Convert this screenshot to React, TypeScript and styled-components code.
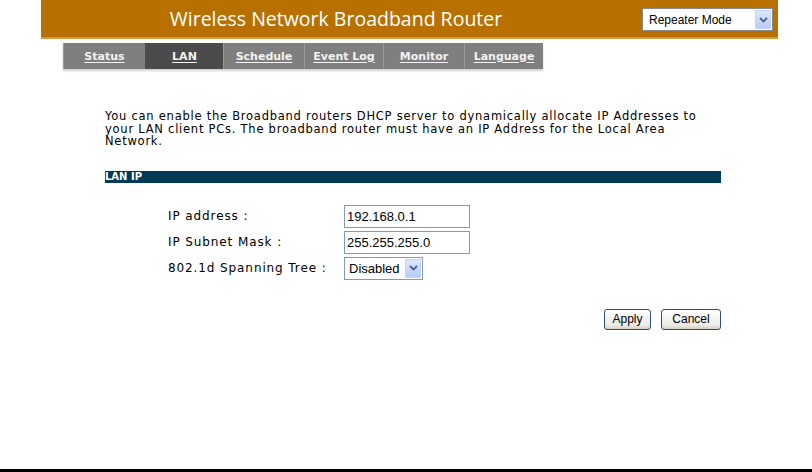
import React from "react";
import styled, { createGlobalStyle } from "styled-components";

const GlobalStyle = createGlobalStyle`
  html, body {
    margin: 0;
    padding: 0;
    background: #ffffff;
  }
  body {
    font-family: "DejaVu Sans", Verdana, sans-serif;
    font-size: 11px;
    color: #000;
  }
`;

const Page = styled.div`
  min-height: 100vh;
  display: flex;
  flex-direction: column;
  box-sizing: border-box;
`;

const Main = styled.div`
  flex: 1;
  width: 737px;
  margin-left: 41px;
`;

const Header = styled.div`
  height: 37px;
  background: #b87100;
  border-bottom: 2px solid #d49a3c;
  display: flex;
  align-items: center;
  position: relative;
`;

const Title = styled.div`
  flex: 1;
  text-align: center;
  font-family: "Open Sans", "Liberation Sans", sans-serif;
  font-size: 19.5px;
  color: #ffffff;
  margin-right: 147px;
`;

const SelectWrap = styled.div<{ $w: number; $h: number }>`
  position: relative;
  width: ${(p) => p.$w}px;
  height: ${(p) => p.$h}px;
  box-sizing: border-box;
  border: 1px solid #7f9db9;
  background: #fff;
  display: flex;
  align-items: center;
  font-family: "Liberation Sans", Arial, sans-serif;
  font-size: 13px;
  padding-left: 4px;
`;

const HeaderSelect = styled(SelectWrap)`
  position: absolute;
  right: 5px;
  top: 8px;
  border-color: #8a8a8a;
  font-size: 12px;
  padding-left: 6px;
`;

const ArrowBox = styled.span`
  position: absolute;
  right: 1px;
  top: 1px;
  bottom: 1px;
  width: 16px;
  background: linear-gradient(#dde8fe, #b6ccfa);
  border: 1px solid #c3d3fd;
  box-sizing: border-box;
  display: flex;
  align-items: center;
  justify-content: center;
`;

const Chevron = () => (
  <svg width="9" height="6" viewBox="0 0 9 6">
    <path d="M1 1 L4.5 4.5 L8 1" fill="none" stroke="#4d6185" strokeWidth="1.8" />
  </svg>
);

const Nav = styled.div`
  display: flex;
  margin: 4px 0 0 22px;
  width: 480px;
  height: 26px;
  background: #7f7f7f;
  box-shadow: 0 2px 2px #d0d0d0;
`;

const Tab = styled.div<{ $active?: boolean; $w: number }>`
  width: ${(p) => p.$w}px;
  display: flex;
  align-items: center;
  justify-content: center;
  background: ${(p) => (p.$active ? "#4b4b4b" : "#7f7f7f")};
  border-left: 1px solid ${(p) => (p.$active ? "#4b4b4b" : "#9a9a9a")};
  color: #f2f2f2;
  font-weight: bold;
  font-size: 11px;
  text-decoration: underline;
  text-underline-offset: 2px;
`;

const Content = styled.div`
  margin-left: 64px;
  width: 616px;
`;

const Intro = styled.p`
  margin: 41px 0 0 0;
  line-height: 12.5px;
  font-size: 11.5px;
  letter-spacing: 0.75px;
  white-space: nowrap;
  color: #000;
`;

const SectionBar = styled.div`
  margin-top: 23px;
  height: 12px;
  background: #003a57;
  color: #fff;
  font-weight: bold;
  font-size: 10px;
  line-height: 12px;
`;

const Form = styled.div`
  margin: 22px 0 0 63px;
  display: grid;
  grid-template-columns: 176px auto;
  row-gap: 3px;
  align-items: center;
`;

const Label = styled.div`
  font-size: 12px;
  letter-spacing: 0.9px;
`;

const TextBox = styled.div`
  width: 126px;
  height: 23px;
  box-sizing: border-box;
  border: 1px solid #7f9db9;
  font-family: "Liberation Sans", Arial, sans-serif;
  font-size: 13px;
  display: flex;
  align-items: center;
  padding-left: 2px;
`;

const Buttons = styled.div`
  display: flex;
  justify-content: flex-end;
  gap: 10px;
  margin-top: 29px;
`;

const Button = styled.div<{ $w: number }>`
  width: ${(p) => p.$w}px;
  height: 21px;
  box-sizing: border-box;
  border: 1px solid #2c4f80;
  border-radius: 3px;
  background: linear-gradient(#ffffff, #ecebe6 80%, #d6d0c5);
  font-family: "Liberation Sans", Arial, sans-serif;
  font-size: 12px;
  display: flex;
  align-items: center;
  justify-content: center;
`;

const Footer = styled.div`
  height: 3px;
  background: #000;
`;

const tabs = [
  { label: "Status", w: 82 },
  { label: "LAN", w: 78, active: true },
  { label: "Schedule", w: 81 },
  { label: "Event Log", w: 79 },
  { label: "Monitor", w: 81 },
  { label: "Language", w: 79 },
];

export default function App() {
  return (
    <Page>
      <GlobalStyle />
      <Main>
        <Header>
          <Title>Wireless Network Broadband Router</Title>
          <HeaderSelect $w={131} $h={23}>
            Repeater Mode
            <ArrowBox>
              <Chevron />
            </ArrowBox>
          </HeaderSelect>
        </Header>
        <Nav>
          {tabs.map((t) => (
            <Tab key={t.label} $w={t.w} $active={t.active}>
              {t.label}
            </Tab>
          ))}
        </Nav>
        <Content>
          <Intro>
            You can enable the Broadband routers DHCP server to dynamically allocate IP Addresses to
            <br />
            your LAN client PCs. The broadband router must have an IP Address for the Local Area
            <br />
            Network.
          </Intro>
          <SectionBar>LAN IP</SectionBar>
          <Form>
            <Label>IP address :</Label>
            <TextBox>192.168.0.1</TextBox>
            <Label>IP Subnet Mask :</Label>
            <TextBox>255.255.255.0</TextBox>
            <Label>802.1d Spanning Tree :</Label>
            <SelectWrap $w={79} $h={23}>
              Disabled
              <ArrowBox>
                <Chevron />
              </ArrowBox>
            </SelectWrap>
          </Form>
          <Buttons>
            <Button $w={47}>Apply</Button>
            <Button $w={60}>Cancel</Button>
          </Buttons>
        </Content>
      </Main>
      <Footer />
    </Page>
  );
}
